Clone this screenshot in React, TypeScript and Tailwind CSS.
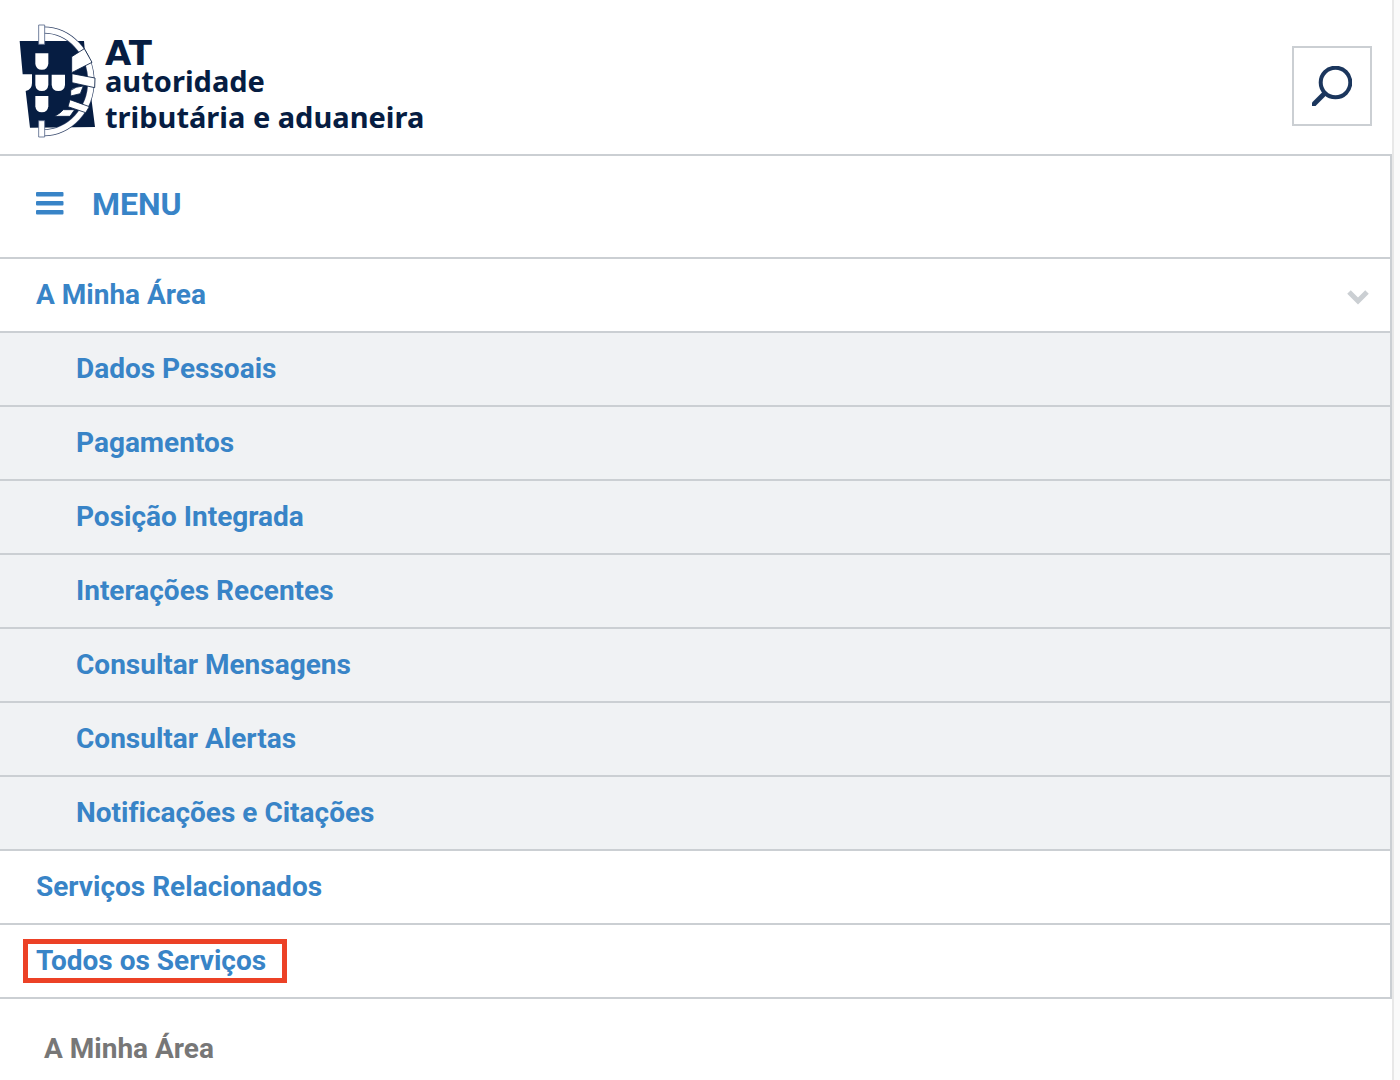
const areaLinks = [
  "Dados Pessoais",
  "Pagamentos",
  "Posição Integrada",
  "Interações Recentes",
  "Consultar Mensagens",
  "Consultar Alertas",
  "Notificações e Citações",
];

function Emblem() {
  return (
    <svg viewBox="27 24 231 348" className="h-[116px] w-[77px] shrink-0" aria-hidden="true">
      <path d="M29 78H222L255 336L60 338L47 228Q66 224 66 204V178H38Z" fill="#061d42" />
      <g fill="#fff">
        <path d="M76 115H115V146Q113 164 95.500 164Q78 164 76 146Z" />
        <path d="M76 179H115V210Q113 228 95.500 228Q78 228 76 210Z" />
        <path d="M125 179H165V210Q163 228 145 228Q127 228 125 210Z" />
        <path d="M76 243H115V274Q113 292 95.500 292Q78 292 76 274Z" />
        <path d="M224 76H262V250H248L252 200Q250 140 224 100Z" />
      </g>
      <path d="M100 45A143 154 0 0 1 100 353" fill="none" stroke="#34466a" strokeWidth="21" />
      <path d="M100 45A143 154 0 0 1 100 353" fill="none" stroke="#fff" strokeWidth="17" />
      <g fill="#fff" stroke="#061d42" strokeWidth="2.500">
        <path d="M185 125L223 101L246 142L185 173Z" />
        <path d="M186 176L255 189L254 218L186 203Z" />
        <path d="M182 226Q196 214 220 213L211 236L182 243Z" />
        <path d="M180 254L238 275L227 293L174 275Z" />
        <path d="M134 304Q152 294 160 284L194 284L180 304Z" />
      </g>
      <g fill="#fff" stroke="#58698a" strokeWidth="2.500">
        <path d="M86 30H104V88H86Z" />
        <path d="M86 317H104V366H86Z" />
      </g>
    </svg>
  );
}

const row = "flex h-[74px] w-full items-center border-b-2 border-[#cbcfd3] text-left";

export default function App() {
  return (
    <div className="min-h-screen bg-[#fafafa] pr-1.5 font-['Roboto',sans-serif] text-[28px] leading-8 font-bold text-[#3884c7] [font-variant-ligatures:none]">
      <div className="min-h-screen border-r-2 border-[#e8e8e8] bg-white">
        <header className="flex h-[154px] items-start justify-between pr-5 pl-[19px]">
          <a href="#inicio" className="flex pt-[23px] text-[#061d42]">
            <Emblem />
            <span className="flex flex-col pt-3.5 pl-[9px] font-['Noto_Sans',sans-serif] text-[29px]">
              <span className="font-['DejaVu_Sans',sans-serif] text-[34px] leading-8">AT</span>
              <span className="leading-6">autoridade</span>
              <span className="pt-2">tributária e aduaneira</span>
            </span>
          </a>
          <button
            type="button"
            aria-label="Pesquisar"
            className="mt-[46px] flex size-20 items-center justify-center border-2 border-[#cbcfd3]"
          >
            <svg viewBox="0 0 40 40" className="size-10" fill="none" stroke="#1b365d" strokeWidth="4">
              <circle cx="23.500" cy="16.500" r="14.800" />
              <path d="M13 27L0 40" strokeWidth="5" />
            </svg>
          </button>
        </header>

        <nav aria-label="Menu principal" className="border-t-2 border-r-2 border-[#cbcfd3]">
          <button
            type="button"
            className="flex h-[103px] w-full items-center border-b-2 border-[#cbcfd3] pb-1.5 pl-9 text-[32px]"
          >
            <svg viewBox="0 0 28 24" className="mr-7 h-6 w-7" fill="currentColor" aria-hidden="true">
              <rect y="0" width="27.500" height="4.500" rx="1" />
              <rect y="9" width="27.500" height="4.500" rx="1" />
              <rect y="18" width="27.500" height="4.500" rx="1" />
            </svg>
            MENU
          </button>
          <button type="button" aria-expanded="true" className={`${row} justify-between pr-5 pl-9`}>
            A Minha Área
            <svg viewBox="0 0 24 16" className="mt-1 h-4 w-6" fill="none" stroke="#cbcfd3" strokeWidth="5" aria-hidden="true">
              <path d="M3 3L12 12L21 3" />
            </svg>
          </button>
          <ul>
            {areaLinks.map((label) => (
              <li key={label}>
                <a href="#area" className={`${row} bg-[#f0f2f4] pl-[76px]`}>
                  {label}
                </a>
              </li>
            ))}
          </ul>
          <a href="#relacionados" className={`${row} pl-9`}>
            Serviços Relacionados
          </a>
          <a href="#todos" className={`${row} pl-[23px]`}>
            <span className="border-5 border-[#ec4126] py-px pr-4 pl-2">Todos os Serviços</span>
          </a>
        </nav>

        <h2 className="pt-[34px] pl-11 text-[#777777]">A Minha Área</h2>
      </div>
    </div>
  );
}
